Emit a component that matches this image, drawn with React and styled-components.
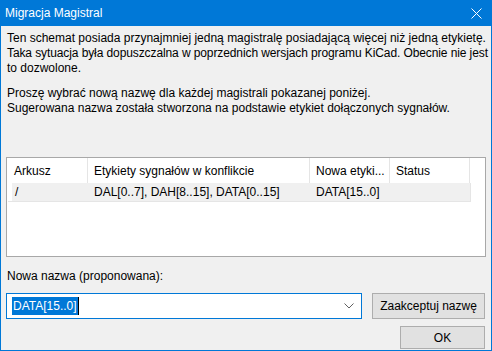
import React from "react";
import styled, { createGlobalStyle } from "styled-components";

const Global = createGlobalStyle`
  html, body { margin: 0; padding: 0; background: #f0f0f0; }
  body { font-family: "Liberation Sans", Arial, sans-serif; font-size: 12px; color: #000; }
  * { box-sizing: border-box; }
`;

const Window = styled.div`
  width: 492px;
  height: 351px;
  border: 1px solid #0078d7;
  border-top: none;
  background: #f0f0f0;
  display: flex;
  flex-direction: column;
  overflow: hidden;
`;

const TitleBar = styled.div`
  height: 26px;
  flex: none;
  background: #0078d7;
  color: #fff;
  display: flex;
  align-items: center;
  justify-content: space-between;
  padding: 0 9px 0 4px;
  font-size: 12px;
`;

const CloseIcon = styled.svg`
  width: 11px;
  height: 11px;
  display: block;
`;

const Body = styled.div`
  flex: 1;
  display: flex;
  flex-direction: column;
  padding: 5px 5px 0 5px;
`;

const Paragraph = styled.div`
  margin: ${(p) => (p.$gap ? "10px" : "0")} 0 0 0;
  padding-left: 1px;
  display: flex;
  flex-direction: column;
`;

const Line = styled.div`
  line-height: 15px;
  white-space: nowrap;
  letter-spacing: ${(p) => (p.$tight ? "-0.1px" : "0")};
`;

const List = styled.div`
  margin-top: 41px;
  width: 480px;
  height: 100px;
  flex: none;
  border: 1px solid #a8a8a8;
  background: #fff;
  display: flex;
  flex-direction: column;
`;

const HeaderRow = styled.div`
  display: flex;
  height: 25px;
  width: 463px;
  border-right: 1px solid #e5e5e5;
`;

const HeaderCell = styled.div`
  width: ${(p) => p.$w}px;
  flex: none;
  padding-left: ${(p) => p.$pl}px;
  display: flex;
  align-items: center;
  border-right: ${(p) => (p.$last ? "none" : "1px solid #e5e5e5")};
  white-space: nowrap;
  overflow: hidden;
`;

const DataRow = styled.div`
  display: flex;
  height: 19px;
  width: 463px;
  margin-left: 1px;
  border-bottom: 1px solid #e5e5e5;
  border-right: 1px solid #e5e5e5;
`;

const DataCell = styled.div`
  width: ${(p) => p.$w}px;
  flex: none;
  padding-left: ${(p) => p.$pl}px;
  display: flex;
  align-items: center;
  background: #f0f0f0;
  margin-left: ${(p) => p.$ml || 0}px;
  white-space: nowrap;
`;

const Label = styled.div`
  margin-top: 12px;
  padding-left: 1px;
  line-height: 15px;
`;

const ComboRow = styled.div`
  margin-top: 9px;
  display: flex;
  align-items: center;
  gap: 10px;
`;

const Combo = styled.div`
  width: 356px;
  height: 26px;
  border: 1px solid #0078d7;
  background: #fff;
  display: flex;
  align-items: center;
  padding: 0 4px 0 5px;
`;

const Selected = styled.span`
  background: #0078d7;
  color: #fff;
  height: 18px;
  line-height: 18px;
  padding: 0 1px;
  border-right: 1px solid #000;
`;

const ComboSpacer = styled.div`
  flex: 1;
`;

const Chevron = styled.svg`
  width: 10px;
  height: 6px;
  display: block;
  margin-right: 3px;
`;

const Button = styled.div`
  width: ${(p) => p.$w}px;
  height: ${(p) => p.$h}px;
  background: #e1e1e1;
  border: 1px solid #adadad;
  display: flex;
  align-items: center;
  justify-content: center;
`;

const ButtonRow = styled.div`
  margin-top: 7px;
  display: flex;
  justify-content: flex-end;
  padding-right: 1px;
`;

export default function App() {
  return (
    <>
      <Global />
      <Window>
        <TitleBar>
          <span>Migracja Magistral</span>
          <CloseIcon viewBox="0 0 11 11">
            <path d="M0.5 0.5 L10.5 10.5 M10.5 0.5 L0.5 10.5" stroke="#fff" strokeWidth="1" />
          </CloseIcon>
        </TitleBar>
        <Body>
          <Paragraph>
            <Line>Ten schemat posiada przynajmniej jedną magistralę posiadającą więcej niż jedną etykietę.</Line>
            <Line $tight>Taka sytuacja była dopuszczalna w poprzednich wersjach programu KiCad. Obecnie nie jest</Line>
            <Line>to dozwolone.</Line>
          </Paragraph>
          <Paragraph $gap>
            <Line>Proszę wybrać nową nazwę dla każdej magistrali pokazanej poniżej.</Line>
            <Line>Sugerowana nazwa została stworzona na podstawie etykiet dołączonych sygnałów.</Line>
          </Paragraph>
          <List>
            <HeaderRow>
              <HeaderCell $w={81} $pl={7}>Arkusz</HeaderCell>
              <HeaderCell $w={222} $pl={6}>Etykiety sygnałów w konflikcie</HeaderCell>
              <HeaderCell $w={80} $pl={6}>Nowa etyki...</HeaderCell>
              <HeaderCell $w={80} $pl={6} $last>Status</HeaderCell>
            </HeaderRow>
            <DataRow>
              <DataCell $w={76} $ml={4} $pl={3}>/</DataCell>
              <DataCell $w={222} $pl={6}>DAL[0..7], DAH[8..15], DATA[0..15]</DataCell>
              <DataCell $w={80} $pl={6}>DATA[15..0]</DataCell>
              <DataCell $w={80} $pl={6}></DataCell>
            </DataRow>
          </List>
          <Label>Nowa nazwa (proponowana):</Label>
          <ComboRow>
            <Combo>
              <Selected>DATA[15..0]</Selected>
              <ComboSpacer />
              <Chevron viewBox="0 0 10 6">
                <path d="M0.5 0.5 L5 5 L9.5 0.5" fill="none" stroke="#606060" strokeWidth="1" />
              </Chevron>
            </Combo>
            <Button $w={113} $h={26}>Zaakceptuj nazwę</Button>
          </ComboRow>
          <ButtonRow>
            <Button $w={85} $h={23}>OK</Button>
          </ButtonRow>
        </Body>
      </Window>
    </>
  );
}
